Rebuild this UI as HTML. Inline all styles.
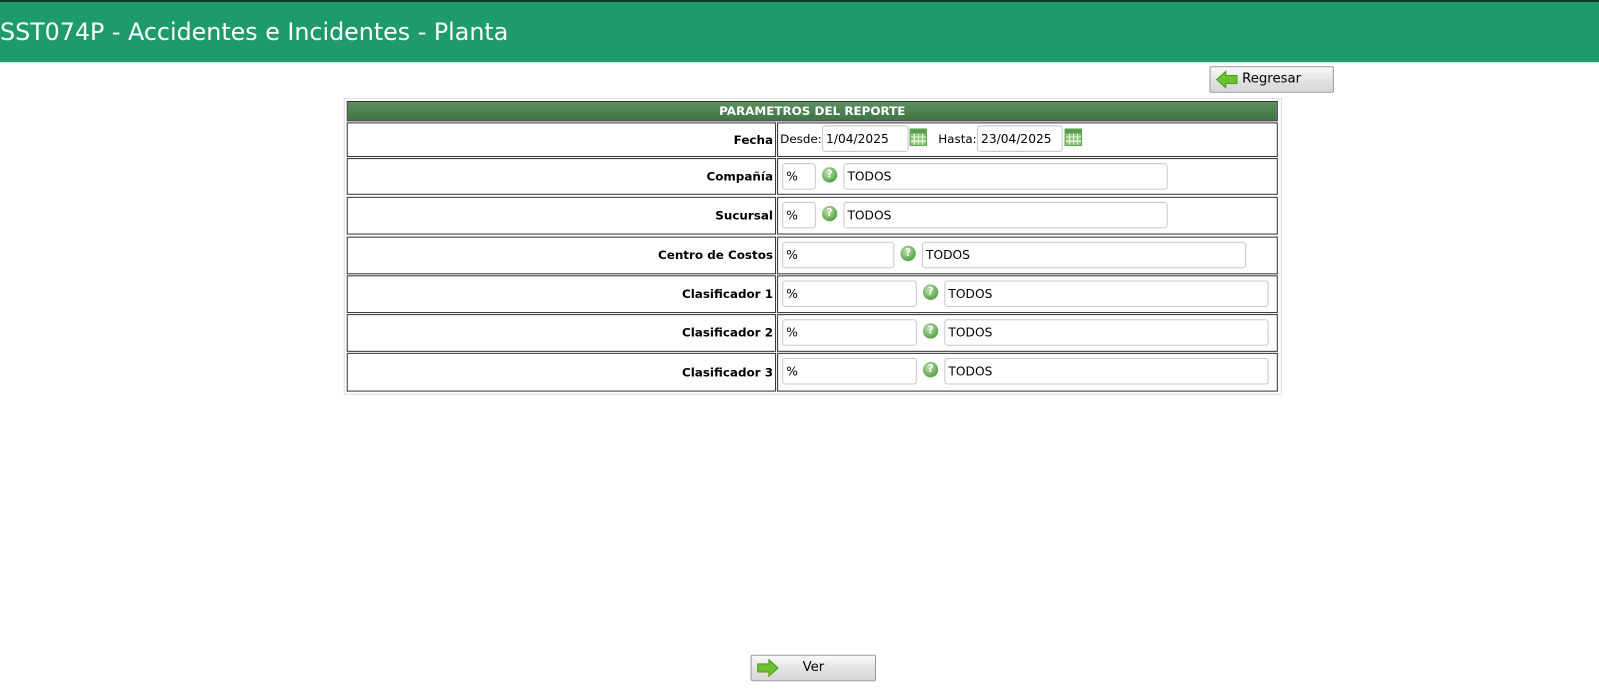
<!DOCTYPE html>
<html><head><meta charset="utf-8"><style>
body{margin:0;width:1599px;height:696px;background:#fff;position:relative;overflow:hidden;font-family:"DejaVu Sans","Liberation Sans",sans-serif;}
#w{position:absolute;left:0;top:0;width:1568px;height:683px;transform:scale(1.0198);transform-origin:0 0}
.a{position:absolute;box-sizing:border-box}
.hdr{left:0;top:0;width:1580px;height:61px;background:#1e9b6c;border-top:2px solid #0d3b2a;color:#fff;font-size:23.3px;line-height:60px;padding-left:0}
.cell{border:1px solid #333;background:#fff}
.lbl{font-weight:bold;font-size:11.7px;text-align:right;color:#000;padding-right:2px}
.inp{border:1px solid #c8c8c8;border-radius:3px;background:#fff;font-size:12px;padding-left:3px;line-height:24px;height:26px;color:#000}
.btn{border:1px solid #999;border-radius:2px;background:linear-gradient(#fafafa,#e4e4e4 50%,#d6d6d6);font-size:13px;color:#000;height:26px;line-height:24px}
.help{width:15px;height:15px;border-radius:50%;background:radial-gradient(circle at 40% 35%,#bfe3b0,#5aa34a 70%);color:#fff;font-size:10px;font-weight:bold;text-align:center;line-height:15px}
.cal{width:17px;height:17px;border:1px solid #5a9e4a;background:#8cc970;
background-image:linear-gradient(#5a9e4a 0 4px,transparent 4px),repeating-linear-gradient(90deg,transparent 0 3px,#e8f5e0 3px 4px),repeating-linear-gradient(transparent 0 3px,#e8f5e0 3px 4px)}
.sm{font-size:11.7px}
</style></head><body><div id="w">
<div class="a hdr">SST074P - Accidentes e Incidentes - Planta</div>

<div class="a btn" style="left:1186px;top:65px;width:122px;">
<svg class="a" style="left:5px;top:3px" width="22" height="18" viewBox="0 0 22 18"><path d="M1 9 L10 1 L10 5 L21 5 L21 13 L10 13 L10 17 Z" fill="#6cc12c" stroke="#4c9a1c" stroke-width="1"/></svg>
<span class="a" style="left:31px;top:0">Regresar</span></div>

<div class="a" style="left:337px;top:96px;width:920px;height:291px;border:1px solid #ddd"></div>
<div class="a" style="left:340px;top:99px;width:913px;height:20px;background:linear-gradient(#5a8f5e,#3f7445);border:1px solid #333;color:#fff;font-weight:bold;font-size:11.7px;text-align:center;line-height:18px">PARAMETROS DEL REPORTE</div>

<div class="a cell lbl" style="left:340px;top:120px;width:421px;height:34px;line-height:32px">Fecha</div>
<div class="a cell" style="left:762px;top:120px;width:491px;height:34px"></div>
<div class="a cell lbl" style="left:340px;top:155px;width:421px;height:36px;line-height:34px">Compañía</div>
<div class="a cell" style="left:762px;top:155px;width:491px;height:36px"></div>
<div class="a cell lbl" style="left:340px;top:193px;width:421px;height:37px;line-height:35px">Sucursal</div>
<div class="a cell" style="left:762px;top:193px;width:491px;height:37px"></div>
<div class="a cell lbl" style="left:340px;top:232px;width:421px;height:37px;line-height:35px">Centro de Costos</div>
<div class="a cell" style="left:762px;top:232px;width:491px;height:37px"></div>
<div class="a cell lbl" style="left:340px;top:270px;width:421px;height:37px;line-height:35px">Clasificador 1</div>
<div class="a cell" style="left:762px;top:270px;width:491px;height:37px"></div>
<div class="a cell lbl" style="left:340px;top:308px;width:421px;height:37px;line-height:35px">Clasificador 2</div>
<div class="a cell" style="left:762px;top:308px;width:491px;height:37px"></div>
<div class="a cell lbl" style="left:340px;top:346px;width:421px;height:38px;line-height:36px">Clasificador 3</div>
<div class="a cell" style="left:762px;top:346px;width:491px;height:38px"></div>

<span class="a sm" style="left:765px;top:129px">Desde:</span>
<div class="a inp" style="left:806px;top:123px;width:85px">1/04/2025</div>
<div class="a cal" style="left:892px;top:126px"></div>
<span class="a sm" style="left:920px;top:129px">Hasta:</span>
<div class="a inp" style="left:958px;top:123px;width:84px">23/04/2025</div>
<div class="a cal" style="left:1044px;top:126px"></div>

<div class="a inp" style="left:767px;top:160px;width:33px">%</div>
<div class="a help" style="left:806px;top:164px">?</div>
<div class="a inp" style="left:827px;top:160px;width:318px">TODOS</div>
<div class="a inp" style="left:767px;top:198px;width:33px">%</div>
<div class="a help" style="left:806px;top:202px">?</div>
<div class="a inp" style="left:827px;top:198px;width:318px">TODOS</div>
<div class="a inp" style="left:767px;top:237px;width:110px">%</div>
<div class="a help" style="left:883px;top:241px">?</div>
<div class="a inp" style="left:904px;top:237px;width:318px">TODOS</div>
<div class="a inp" style="left:767px;top:275px;width:132px">%</div>
<div class="a help" style="left:905px;top:279px">?</div>
<div class="a inp" style="left:926px;top:275px;width:318px">TODOS</div>
<div class="a inp" style="left:767px;top:313px;width:132px">%</div>
<div class="a help" style="left:905px;top:317px">?</div>
<div class="a inp" style="left:926px;top:313px;width:318px">TODOS</div>
<div class="a inp" style="left:767px;top:351px;width:132px">%</div>
<div class="a help" style="left:905px;top:355px">?</div>
<div class="a inp" style="left:926px;top:351px;width:318px">TODOS</div>

<div class="a btn" style="left:736px;top:642px;width:123px;">
<svg class="a" style="left:5px;top:3px" width="22" height="18" viewBox="0 0 22 18"><path d="M21 9 L12 1 L12 5 L1 5 L1 13 L12 13 L12 17 Z" fill="#6cc12c" stroke="#4c9a1c" stroke-width="1"/></svg>
<span class="a" style="left:50px;top:0">Ver</span></div>
</div></body></html>
